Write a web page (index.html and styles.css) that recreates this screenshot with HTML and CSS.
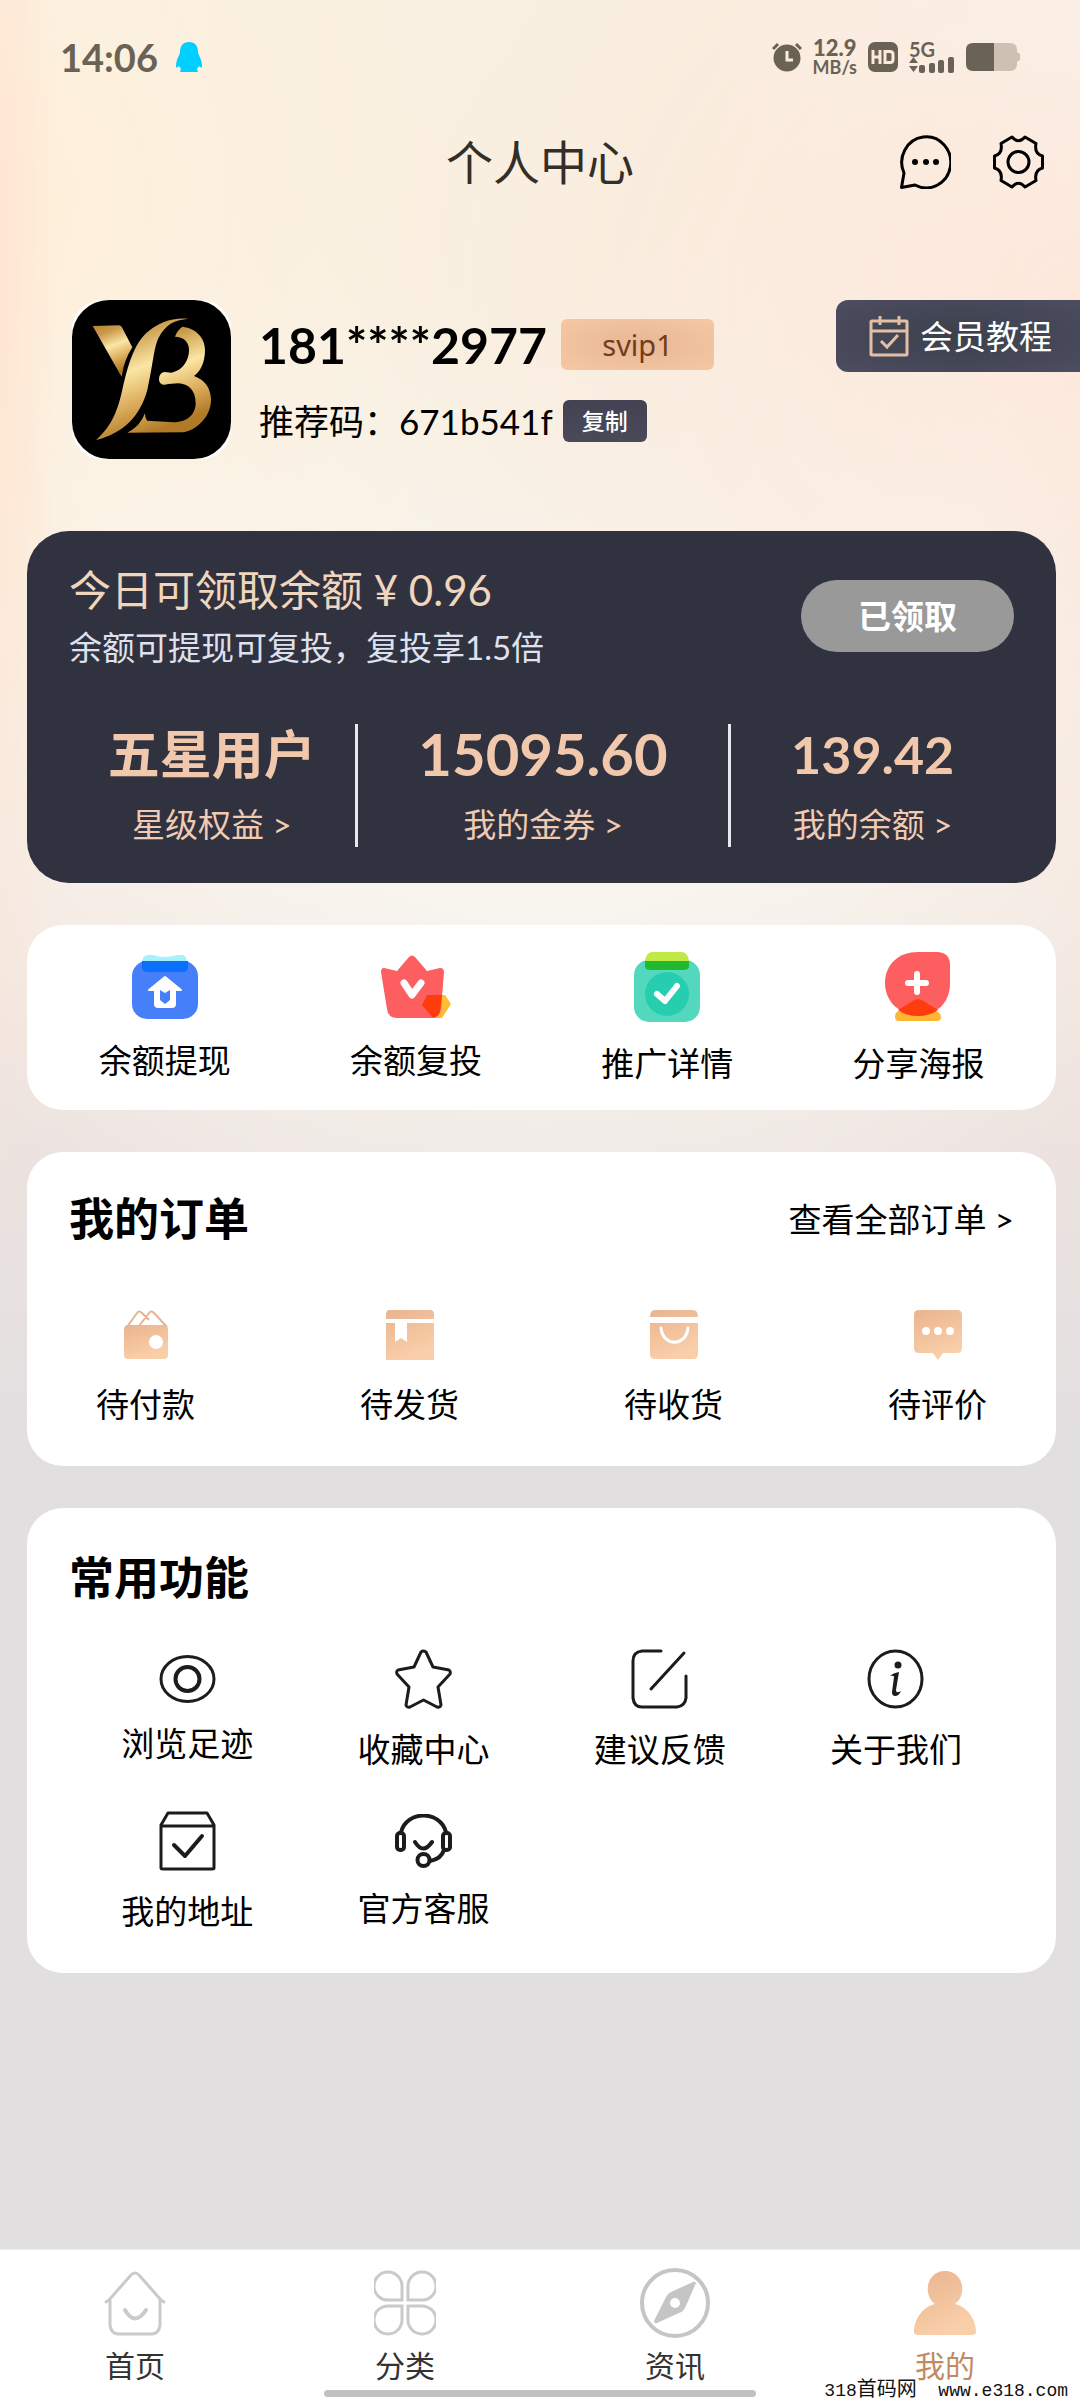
FILE: index.html
```html
<!DOCTYPE html>
<html lang="zh-CN">
<head>
<meta charset="utf-8">
<meta name="viewport" content="width=device-width, initial-scale=1">
<title>个人中心</title>
<link rel="stylesheet" href="styles.css">
</head>
<body>
<svg class="defs" width="0" height="0" aria-hidden="true">
  <defs>
    <linearGradient id="gold" x1="0" y1="0" x2="0.3" y2="1">
      <stop offset="0" stop-color="#b5822f"/><stop offset="0.22" stop-color="#c99a4b"/><stop offset="0.5" stop-color="#fbe6a4"/><stop offset="0.75" stop-color="#dcae5d"/><stop offset="1" stop-color="#b07a26"/>
    </linearGradient>
    <linearGradient id="peach" x1="0" y1="0" x2="0.4" y2="1">
      <stop offset="0" stop-color="#e9b48f"/><stop offset="1" stop-color="#f9cfa9"/>
    </linearGradient>
  </defs>
</svg>

<div class="status">
  <span class="status-time">14:06</span>
  <svg class="status-qq" width="26" height="30" viewBox="0 0 26 30" fill="#00cfff"><path d="M13 0C7 0 4 4 4 10c0 3-4 7-4 14 0 2 1 2 3 0l2 3-1 3h18l-1-3 2-3c2 2 3 2 3 0 0-7-4-11-4-14 0-6-3-10-9-10z"/></svg>
  <div class="status-right">
    <svg width="30" height="30" viewBox="0 0 30 30"><circle cx="15" cy="16" r="13.500" fill="#6a6355"/><path d="M1 7l5-5M29 7l-5-5" stroke="#6a6355" stroke-width="3"/><path d="M15 9v9h6" fill="none" stroke="#fcebdc" stroke-width="3"/></svg>
    <div class="status-speed"><b>12.9</b><span>MB/s</span></div>
    <svg width="30" height="30" viewBox="0 0 30 30"><rect width="30" height="30" rx="7" fill="#6a6355"/><path d="M5 8v14M12 8v14M5 15h7M17 9.500h5q3 0 3 3v5q0 3-3 3h-5z" fill="none" stroke="#fcebdc" stroke-width="3"/></svg>
    <div class="status-net">
      <b>5G</b>
      <svg width="46" height="17" viewBox="0 0 46 17" fill="#6a6355"><path d="M0 7l4.500-6L9 7zM0 10h9l-4.500 6z"/><rect x="10" y="9" width="6" height="8" rx="2"/><rect x="20" y="7" width="6" height="10" rx="2"/><rect x="29" y="4" width="6" height="13" rx="2"/><rect x="39" y="1" width="6" height="16" rx="2"/></svg>
    </div>
    <svg width="54" height="28" viewBox="0 0 54 28"><path d="M28 0h16q7 0 7 7v2l3 2v6l-3 2v2q0 7-7 7H28z" fill="#cdc1b4"/><path d="M28 0H7Q0 0 0 7v14q0 7 7 7h21z" fill="#6a6355"/></svg>
  </div>
</div>

<header class="topbar">
  <h1>个人中心</h1>
  <div class="topbar-actions">
    <button type="button" aria-label="消息"><svg width="51" height="54" viewBox="0 0 51 54"><path d="M1.500 52.500L4 38A24.500 25.500 0 1 1 15 50Z" fill="none" stroke="#000" stroke-width="3" stroke-linejoin="round"/><g fill="#000"><circle cx="15" cy="27" r="3"/><circle cx="26" cy="27" r="3"/><circle cx="36" cy="27" r="3"/></g></svg></button>
    <button type="button" aria-label="设置"><svg width="51" height="54" viewBox="0 0 51 54" fill="none" stroke="#000" stroke-width="3" stroke-linejoin="round"><path d="M19 2Q25.500 9.500 32 2L43 8.500Q41 18.500 49.500 21V33Q41 35.500 43 45.500L32 52Q25.500 44.500 19 52L8 45.500Q10 35.500 1.500 33V21Q10 18.500 8 8.500Z"/><circle cx="25.500" cy="27" r="10.500"/></svg></button>
  </div>
</header>

<section class="profile">
  <svg class="avatar" viewBox="96 90 477 477" role="img" aria-label="头像">
    <rect x="96" y="90" width="477" height="477" rx="112" fill="#000"/>
    <g fill="url(#gold)">
      <path d="M158 168L237 166Q245 167 250 180L277 232Q252 270 245 320L240 312Z"/>
      <path d="M446 146Q372 140 318 190C285 222 268 270 250 345C235 420 215 470 168 510C250 490 300 440 322 360C340 280 340 240 355 205C375 165 400 150 446 146Z"/>
      <path d="M427 170C470 175 495 205 495 240C495 280 480 305 462 318C495 330 513 355 513 390C513 440 470 480 430 487L262 488Q300 470 315 430Q316 447 322 452L400 457C445 457 467 430 467 400C467 360 445 342 415 340L385 342Q360 350 357 330Q356 310 372 306L395 308C430 300 447 270 447 240C447 215 430 200 405 200Q412 180 427 170Z"/>
    </g>
  </svg>
  <div class="who">
    <div class="who-row"><strong class="phone">181****2977</strong><span class="level">svip1</span></div>
    <div class="who-row code"><span>推荐码：671b541f</span><button type="button" class="copy">复制</button></div>
  </div>
  <a class="tutorial" href="#tutorial">
    <svg width="40" height="41" viewBox="0 0 40 41" fill="none" stroke="#e3bfa8" stroke-width="3"><rect x="2" y="5" width="36" height="34" rx="1"/><path d="M2 15h36M11 0v9M30 0v9M12 25l6 6 11-12"/></svg>
    会员教程
  </a>
</section>

<main>
  <section class="card wallet">
    <div class="wallet-top">
      <div>
        <p class="wallet-title">今日可领取余额 ¥ 0.96</p>
        <p class="wallet-note">余额可提现可复投，复投享1.5倍</p>
      </div>
      <button type="button" class="claimed">已领取</button>
    </div>
    <div class="stats">
      <a href="#level"><b>五星用户</b><span>星级权益 &gt;</span></a>
      <a href="#coupon"><b class="big">15095.60</b><span>我的金券 &gt;</span></a>
      <a href="#balance"><b>139.42</b><span>我的余额 &gt;</span></a>
    </div>
  </section>

  <nav class="card quick">
    <a class="item" href="#withdraw">
      <svg width="66" height="64" viewBox="0 0 66 64"><rect y="6" width="66" height="58" rx="15" fill="#4580fa"/><path d="M10 6q1-6 6-6h5q12 4 24 0h5q4 0 5 6z" fill="#a8f1fb"/><path d="M10 6h46v6q0 5-6 5H16q-6 0-6-5z" fill="#0a6ffa"/><path d="M33 22L17 35h6v14q0 3 3 3h14q3 0 3-3V35h6z" fill="#fff" stroke="#fff" stroke-width="2" stroke-linejoin="round"/><path d="M28 35l5 3 5-3v10l-5 4-5-4z" fill="#4580fa"/></svg>
      <span>余额提现</span>
    </a>
    <a class="item" href="#reinvest">
      <svg width="70" height="64" viewBox="0 0 70 64"><path d="M50 40h14l6 9-9 14h-8L42 50z" fill="#ffbd33"/><path d="M3 13l13 3L28 2q3-3 6 0l12 14 13-3q4 0 4 4l-3 37q-1 9-10 9H16q-9 0-10-9L0 17q0-4 3-4z" fill="#fd5e60"/><path d="M46 40h15l-2 16q-2 6-7 7L41 50z" fill="#ff3d0c"/><path d="M23 28l8 12 9-12" fill="none" stroke="#fff" stroke-width="7" stroke-linecap="round" stroke-linejoin="round"/></svg>
      <span>余额复投</span>
    </a>
    <a class="item" href="#promotion">
      <svg width="66" height="70" viewBox="0 0 66 70"><rect y="8" width="66" height="62" rx="15" fill="#53d8bd"/><circle cx="33" cy="42" r="22" fill="#26ceaf"/><path d="M11 9q1-9 8-9h28q7 0 8 9z" fill="#bfe944"/><path d="M11 9h44v5q0 4-5 4H16q-5 0-5-4z" fill="#22b932"/><path d="M23 42l8 7 12-15" fill="none" stroke="#fff" stroke-width="6" stroke-linecap="round" stroke-linejoin="round"/></svg>
      <span>推广详情</span>
    </a>
    <a class="item" href="#poster">
      <svg width="66" height="70" viewBox="0 0 66 70"><path d="M13 59h38q5 2 5 6 0 4-4 4H14q-4 0-4-4 0-4 3-6z" fill="#fdb735"/><path d="M33 0h20q12 1 12 13v18C65 52 51 63 33 63S0 50 0 31 14 0 33 0z" fill="#fd5e60"/><path d="M13 58l13-8q7-6 14 0l13 8q-8 6-20 6t-20-6z" fill="#ff3d0c"/><path d="M32 22v18M23 31h18" stroke="#fff" stroke-width="6" stroke-linecap="round"/></svg>
      <span>分享海报</span>
    </a>
  </nav>

  <section class="card orders">
    <div class="card-head"><h2>我的订单</h2><a href="#orders">查看全部订单 &gt;</a></div>
    <div class="order-list">
      <a class="item" href="#unpaid">
        <svg width="48" height="50" viewBox="0 0 48 50"><path d="M5 17L15 3q2-3 5 0l7 7M17 16L27 3q2-3 5 0l13 14" fill="none" stroke="#e3b394" stroke-width="2"/><path fill-rule="evenodd" d="M6 15h36q4 0 4 5v25q0 4-4 4H6q-4 0-4-4V20q0-5 4-5zM34 25a7 7 0 1 0 0 14 7 7 0 1 0 0-14z" fill="url(#peach)"/></svg>
        <span>待付款</span>
      </a>
      <a class="item" href="#unshipped">
        <svg width="48" height="50" viewBox="0 0 48 50" fill="url(#peach)"><path d="M4 0h40q4 0 4 4v5H0V4q0-4 4-4zM0 13h9v19l6-4 6 4V13h27v37H0z"/></svg>
        <span>待发货</span>
      </a>
      <a class="item" href="#receiving">
        <svg width="48" height="50" viewBox="0 0 48 50"><path d="M5 0h38q5 0 5 7H0q0-7 5-7zM0 13h48v31q0 5-5 5H5q-5 0-5-5z" fill="url(#peach)"/><path d="M11 18c2 19 25 19 27 0" fill="none" stroke="#fff" stroke-width="3" stroke-linecap="round"/></svg>
        <span>待收货</span>
      </a>
      <a class="item" href="#review">
        <svg width="48" height="50" viewBox="0 0 48 50"><path d="M5 0h38q5 0 5 5v33q0 5-5 5H29l-5 7-5-7H5q-5 0-5-5V5q0-5 5-5z" fill="url(#peach)"/><g fill="#fff"><circle cx="12" cy="21" r="4"/><circle cx="24" cy="21" r="4"/><circle cx="36" cy="21" r="4"/></g></svg>
        <span>待评价</span>
      </a>
    </div>
  </section>

  <section class="card tools">
    <div class="card-head"><h2>常用功能</h2></div>
    <div class="tool-grid">
      <a class="item" href="#history">
        <svg width="57" height="48" viewBox="0 0 57 48" fill="none" stroke="#1c1c1c"><ellipse cx="28.500" cy="24" rx="26.500" ry="22.500" stroke-width="3"/><circle cx="28.500" cy="24" r="12" stroke-width="4"/></svg>
        <span>浏览足迹</span>
      </a>
      <a class="item" href="#favorites">
        <svg width="57" height="60" viewBox="0 0 57 60" fill="none" stroke="#1c1c1c" stroke-width="3" stroke-linejoin="round"><path d="M26 3q2-2 5 0l7 15 16 3q2 2 1 4L43 38l3 18q-1 3-4 2L28.500 51 15 58q-3 1-4-2l3-18L2 25q-1-3 1-4l16-3z"/></svg>
        <span>收藏中心</span>
      </a>
      <a class="item" href="#feedback">
        <svg width="57" height="60" viewBox="0 0 57 60" fill="none" stroke="#1c1c1c" stroke-width="3" stroke-linecap="round"><path d="M30 2H11Q2 3 2 12v37q1 9 9 9h35q8-1 9-9V27M53 4L20 40"/></svg>
        <span>建议反馈</span>
      </a>
      <a class="item" href="#about">
        <svg width="57" height="60" viewBox="0 0 57 60"><ellipse cx="28.500" cy="30" rx="26.500" ry="28" fill="none" stroke="#1c1c1c" stroke-width="3"/><circle cx="31" cy="16" r="3.500" fill="#1c1c1c"/><path d="M23 27q3-3 9-4l-3 18q0 4 5 1-2 5-6 5-3 0-3-4l2-15q0-2-4-1z" fill="#1c1c1c"/></svg>
        <span>关于我们</span>
      </a>
      <a class="item" href="#address">
        <svg width="57" height="60" viewBox="0 0 57 60" fill="none" stroke="#1c1c1c" stroke-width="3" stroke-linejoin="round"><path d="M2 14L9 2h39l7 12v43q0 1-2 1H4q-2 0-2-1zM2 15h53"/><path d="M15 34l11 11 17-20" stroke-width="4" stroke-linecap="round"/></svg>
        <span>我的地址</span>
      </a>
      <a class="item" href="#service">
        <svg width="57" height="54" viewBox="0 0 57 54" fill="none" stroke="#1c1c1c" stroke-width="4"><path d="M6 18C12-4 45-4 51 18M49 36q-3 9-14 11M20 28q8 13 17 0" stroke-linecap="round"/><rect x="2" y="19" width="7" height="17" rx="3"/><rect x="48" y="19" width="7" height="17" rx="3"/><circle cx="28.500" cy="46" r="6"/></svg>
        <span>官方客服</span>
      </a>
    </div>
  </section>
</main>

<nav class="tabbar">
  <a href="#home">
    <svg width="62" height="70" viewBox="0 0 62 70" fill="none" stroke="#cbc9ca" stroke-width="3" stroke-linecap="round" stroke-linejoin="round"><path d="M2 34l3-2L27 7q4-4 8 0l22 25 3 2M6 32v25q1 9 9 9h32q8 0 9-9V32"/><path d="M21 42q10 17 21 0" stroke-width="4"/></svg>
    <span>首页</span>
  </a>
  <a href="#category">
    <svg width="62" height="70" viewBox="0 0 62 70" fill="none" stroke="#cbc9ca" stroke-width="3"><path d="M28 32H15A14 14 0 1 1 28 18zM34 32h13A14 14 0 1 0 34 18zM28 38H15A14 14 0 1 0 28 52zM34 38h13A14 14 0 1 1 34 52z"/></svg>
    <span>分类</span>
  </a>
  <a href="#news">
    <svg width="72" height="70" viewBox="0 0 72 70"><circle cx="36" cy="35" r="33" fill="none" stroke="#c5c5c5" stroke-width="4"/><path fill-rule="evenodd" d="M57 15L46 40q-2 4-6 5L18 55q-3 1-3-2l12-24q1-3 5-5l22-10q2-1 3 1zM36 30a5 5 0 1 0 0 10 5 5 0 1 0 0-10z" fill="#c5c5c5"/></svg>
    <span>资讯</span>
  </a>
  <a href="#mine" class="active" aria-current="page">
    <svg width="62" height="70" viewBox="0 0 62 70" fill="url(#peach)"><path d="M21 36C8 26 13 3 31 3s23 23 10 33c13 3 21 16 21 28q0 3-4 3H4q-4 0-4-3c0-12 8-25 21-28z"/></svg>
    <span>我的</span>
  </a>
  <div class="home-indicator"></div>
  <div class="watermark">318<span>首码网</span>&nbsp; www.e318.com</div>
</nav>
</body>
</html>
```

FILE: styles.css
```css
* { box-sizing: border-box; }

body {
  margin: 0;
  min-height: 100vh;
  display: flex;
  flex-direction: column;
  font-family: Lato, "Noto Sans CJK SC", sans-serif;
  font-size: 33px;
  line-height: 40px;
  color: #000;
  background:
    radial-gradient(60px 900px at 0 300px, rgba(255, 226, 206, 0.7), rgba(255, 226, 206, 0)) no-repeat,
    radial-gradient(700px 600px at 100% 300px, rgba(255, 226, 210, 0.7), rgba(255, 226, 210, 0)) no-repeat,
    radial-gradient(520px 620px at 0 200px, rgba(255, 238, 214, 0.9), rgba(255, 238, 214, 0)) no-repeat,
    radial-gradient(900px 1400px at 50% 0, rgba(248, 240, 226, 1) 20%, rgba(248, 246, 240, 1) 60%, rgba(248, 244, 238, 0)) no-repeat,
    linear-gradient(#fde8d8, #f4e6de 900px, #e2dfe1 1450px);
}

a { color: inherit; text-decoration: none; }
button { font: inherit; border: 0; padding: 0; background: none; }
h1, h2, p { margin: 0; font-weight: 400; }
svg { display: block; flex: none; }
.defs { position: absolute; }

.status {
  display: flex;
  align-items: center;
  height: 114px;
  padding: 0 60px;
  color: #6a6355;
}
.status-time { font-size: 38px; font-weight: 700; }
.status-qq { margin-left: 18px; }
.status-right { margin-left: auto; display: flex; align-items: center; gap: 11px; }
.status-speed { display: flex; flex-direction: column; align-items: center; font-size: 18px; line-height: 18px; font-weight: 700; }
.status-speed b { font-size: 22px; line-height: 20px; }
.status-net { font-size: 20px; line-height: 14px; }
.status-net b { display: block; }

.topbar {
  display: grid;
  grid-template-columns: 1fr auto 1fr;
  align-items: center;
  height: 96px;
  padding: 0 36px;
}
.topbar h1 { grid-column: 2; font-size: 47px; line-height: 60px; color: #332e28; }
.topbar-actions { justify-self: end; display: flex; gap: 42px; }

.profile { display: flex; align-items: center; margin-top: 90px; padding-left: 72px; }
.avatar { width: 159px; height: 159px; border-radius: 30px; background: #fff; }
.who { margin-left: 28px; }
.who-row { display: flex; align-items: center; height: 56px; }
.phone { font-size: 50px; font-weight: 700; }
.level {
  width: 153px;
  margin-left: 14px;
  border-radius: 6px;
  font-family: "Noto Sans", sans-serif;
  font-size: 29px;
  line-height: 51px;
  text-align: center;
  color: #6f3d1b;
  background: radial-gradient(#e8b795, #f5c8a2);
}
.code { height: 44px; margin-top: 26px; font-size: 35px; }
.copy {
  width: 84px;
  margin-left: 10px;
  border-radius: 6px;
  font-size: 23px;
  font-weight: 500;
  line-height: 42px;
  color: #fff;
  background: linear-gradient(#434252, #4b4a5b);
}
.tutorial {
  display: flex;
  align-items: center;
  align-self: flex-start;
  gap: 11px;
  height: 72px;
  margin-left: auto;
  padding: 0 28px 0 33px;
  border-radius: 12px 0 0 12px;
  color: #fff;
  background: radial-gradient(#3c404b, #4c4d61);
}

main { display: flex; flex-direction: column; gap: 42px; margin: 72px 24px 42px 27px; }
.card { border-radius: 36px; background: #fff; }

.wallet { padding: 34px 42px 36px; border-radius: 42px; color: #f0cbb2; background: #31323f; }
.wallet-top { display: flex; align-items: center; justify-content: space-between; }
.wallet-title { font-size: 42px; line-height: 50px; color: #efd6bd; }
.wallet-note { margin-top: 12px; color: #dfe1ee; }
.claimed {
  width: 213px;
  height: 72px;
  border-radius: 36px;
  font-weight: 700;
  color: #fff;
  background: #989998;
}
.stats { display: grid; grid-template-columns: 13fr 17fr 13fr; margin-top: 57px; }
.stats a { display: flex; flex-direction: column; align-items: center; gap: 20px; height: 123px; }
.stats a + a { border-left: 3px solid #e6e8f0; }
.stats b { font-size: 52px; line-height: 60px; color: #f2c8ad; }
.stats .big { font-size: 58px; }

.item { display: flex; flex-direction: column; align-items: center; justify-content: center; gap: 20px; }
.quick { display: grid; grid-template-columns: repeat(4, 1fr); padding: 27px 12px; }
.quick .item { gap: 21px; }

.card-head { display: flex; align-items: center; justify-content: space-between; height: 60px; }
.card-head h2 { font-size: 45px; font-weight: 700; }
.orders, .tools { padding: 40px 42px 42px; }
.orders { padding-top: 37px; }
.order-list { display: flex; justify-content: space-between; margin-top: 61px; padding: 0 27px; }
.order-list .item { gap: 24px; }
.tool-grid { display: grid; grid-template-columns: repeat(4, 1fr); row-gap: 42px; margin-top: 41px; }

.tabbar {
  position: relative;
  display: grid;
  grid-template-columns: repeat(4, 1fr);
  margin-top: auto;
  padding: 18px 0 15px;
  border-top: 1px solid #eee;
  font-size: 30px;
  color: #333;
  background: #fff;
}
.tabbar a { display: flex; flex-direction: column; align-items: center; gap: 7px; }
.tabbar .active { color: #c28a62; }
.home-indicator {
  position: absolute;
  left: 30%;
  right: 30%;
  bottom: 3px;
  height: 7px;
  border-radius: 4px;
  background: #c1c1c1;
}
.watermark {
  position: absolute;
  right: 12px;
  bottom: -1px;
  font-family: "Liberation Mono", "Noto Sans CJK SC", monospace;
  font-size: 18px;
  line-height: 20px;
  color: #111;
}
.watermark span { font-size: 20px; }
```
